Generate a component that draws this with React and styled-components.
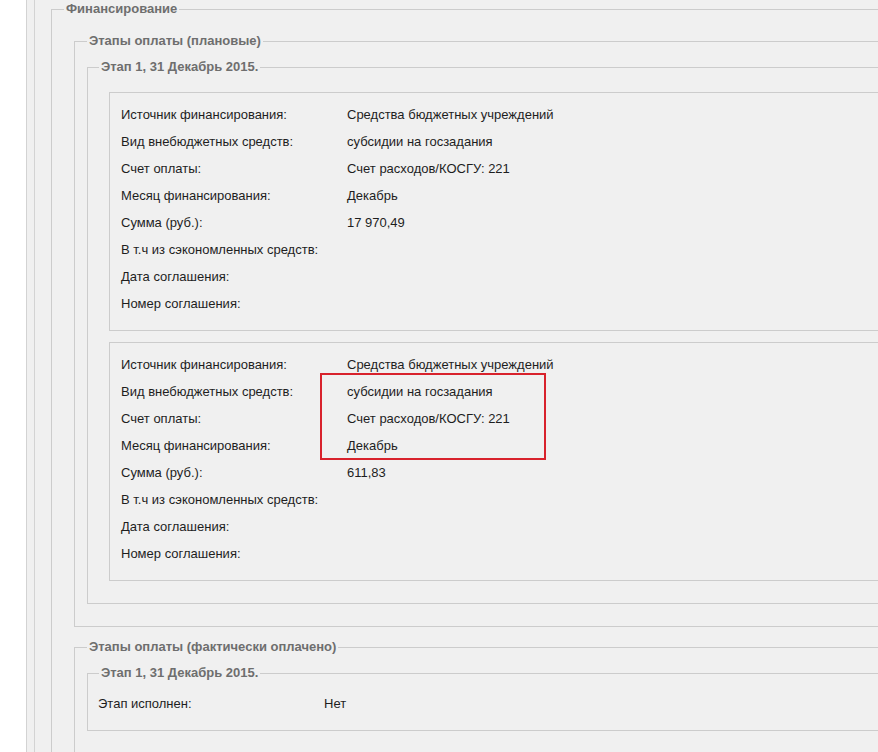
import React from "react";
import styled, { createGlobalStyle } from "styled-components";

const GlobalStyle = createGlobalStyle`
  html, body {
    margin: 0;
    background: #ffffff;
    overflow: hidden;
  }
  body {
    font-family: "Liberation Sans", Arial, sans-serif;
    font-size: 13px;
    color: #1e1e1e;
  }
`;

const Page = styled.div`
  display: flex;
  min-height: 752px;
`;

const Gutter = styled.div`
  width: 26px;
  flex: none;
  background: #ffffff;
`;

const Panel = styled.div`
  flex: none;
  width: 1100px;
  background: #f0f0f0;
  border-left: 1px solid #d3d3d3;
  padding-left: 7px;
`;

const InnerPanel = styled.div`
  border-left: 1px solid #d3d3d3;
  padding: 1px 0 0 16px;
  min-height: 751px;
`;

const Group = styled.fieldset`
  margin: ${(p) => p.$top || 0}px 0 0 0;
  padding: 0 0 ${(p) => p.$bottom || 0}px 0;
  border: 1px solid #cccccc;
  min-width: 0;
`;

const Legend = styled.legend`
  margin-left: ${(p) => p.$offset || 12}px;
  padding: 0 2px;
  line-height: 16px;
  font-size: 13px;
  font-weight: bold;
  color: #6e6e6e;
`;

const Body = styled.div`
  padding-top: ${(p) => p.$top || 0}px;
  padding-left: ${(p) => p.$left || 0}px;
`;

const Box = styled.div`
  position: relative;
  border: 1px solid #cccccc;
  margin-top: ${(p) => p.$top || 0}px;
  padding: 8px 0 13px 11px;
`;

const Row = styled.div`
  display: flex;
  height: 27px;
  line-height: 27px;
`;

const Label = styled.div`
  width: 226px;
  flex: none;
  white-space: nowrap;
`;

const Value = styled.div`
  white-space: nowrap;
`;

const Highlight = styled.div`
  position: absolute;
  left: 210px;
  top: 30px;
  width: 222px;
  height: 83px;
  border: 2px solid #d8222c;
`;

const labels = [
  "Источник финансирования:",
  "Вид внебюджетных средств:",
  "Счет оплаты:",
  "Месяц финансирования:",
  "Сумма (руб.):",
  "В т.ч из сэкономленных средств:",
  "Дата соглашения:",
  "Номер соглашения:",
];

const payments = [
  ["Средства бюджетных учреждений", "субсидии на госзадания", "Счет расходов/КОСГУ: 221", "Декабрь", "17 970,49", "", "", ""],
  ["Средства бюджетных учреждений", "субсидии на госзадания", "Счет расходов/КОСГУ: 221", "Декабрь", "611,83", "", "", ""],
];

function PaymentBox({ values, top, marked }) {
  return (
    <Box $top={top}>
      {labels.map((l, i) => (
        <Row key={l}>
          <Label>{l}</Label>
          <Value>{values[i]}</Value>
        </Row>
      ))}
      {marked && <Highlight />}
    </Box>
  );
}

export default function App() {
  return (
    <>
      <GlobalStyle />
      <Page>
        <Gutter />
        <Panel>
          <InnerPanel>
            <Group $bottom={200}>
              <Legend>Финансирование</Legend>
              <Body $left={22}>
                <Group $top={16} $bottom={22}>
                  <Legend>Этапы оплаты (плановые)</Legend>
                  <Body $left={12}>
                    <Group $top={10} $bottom={22}>
                      <Legend $offset={11}>Этап 1, 31 Декабрь 2015.</Legend>
                      <Body $top={17} $left={21}>
                        <PaymentBox values={payments[0]} />
                        <PaymentBox values={payments[1]} top={11} marked />
                      </Body>
                    </Group>
                  </Body>
                </Group>
                <Group $top={12} $bottom={100}>
                  <Legend>Этапы оплаты (фактически оплачено)</Legend>
                  <Body $left={12}>
                    <Group $top={10} $bottom={13}>
                      <Legend $offset={11}>Этап 1, 31 Декабрь 2015.</Legend>
                      <Body $top={9} $left={10}>
                        <Row>
                          <Label>Этап исполнен:</Label>
                          <Value>Нет</Value>
                        </Row>
                      </Body>
                    </Group>
                  </Body>
                </Group>
              </Body>
            </Group>
          </InnerPanel>
        </Panel>
      </Page>
    </>
  );
}
